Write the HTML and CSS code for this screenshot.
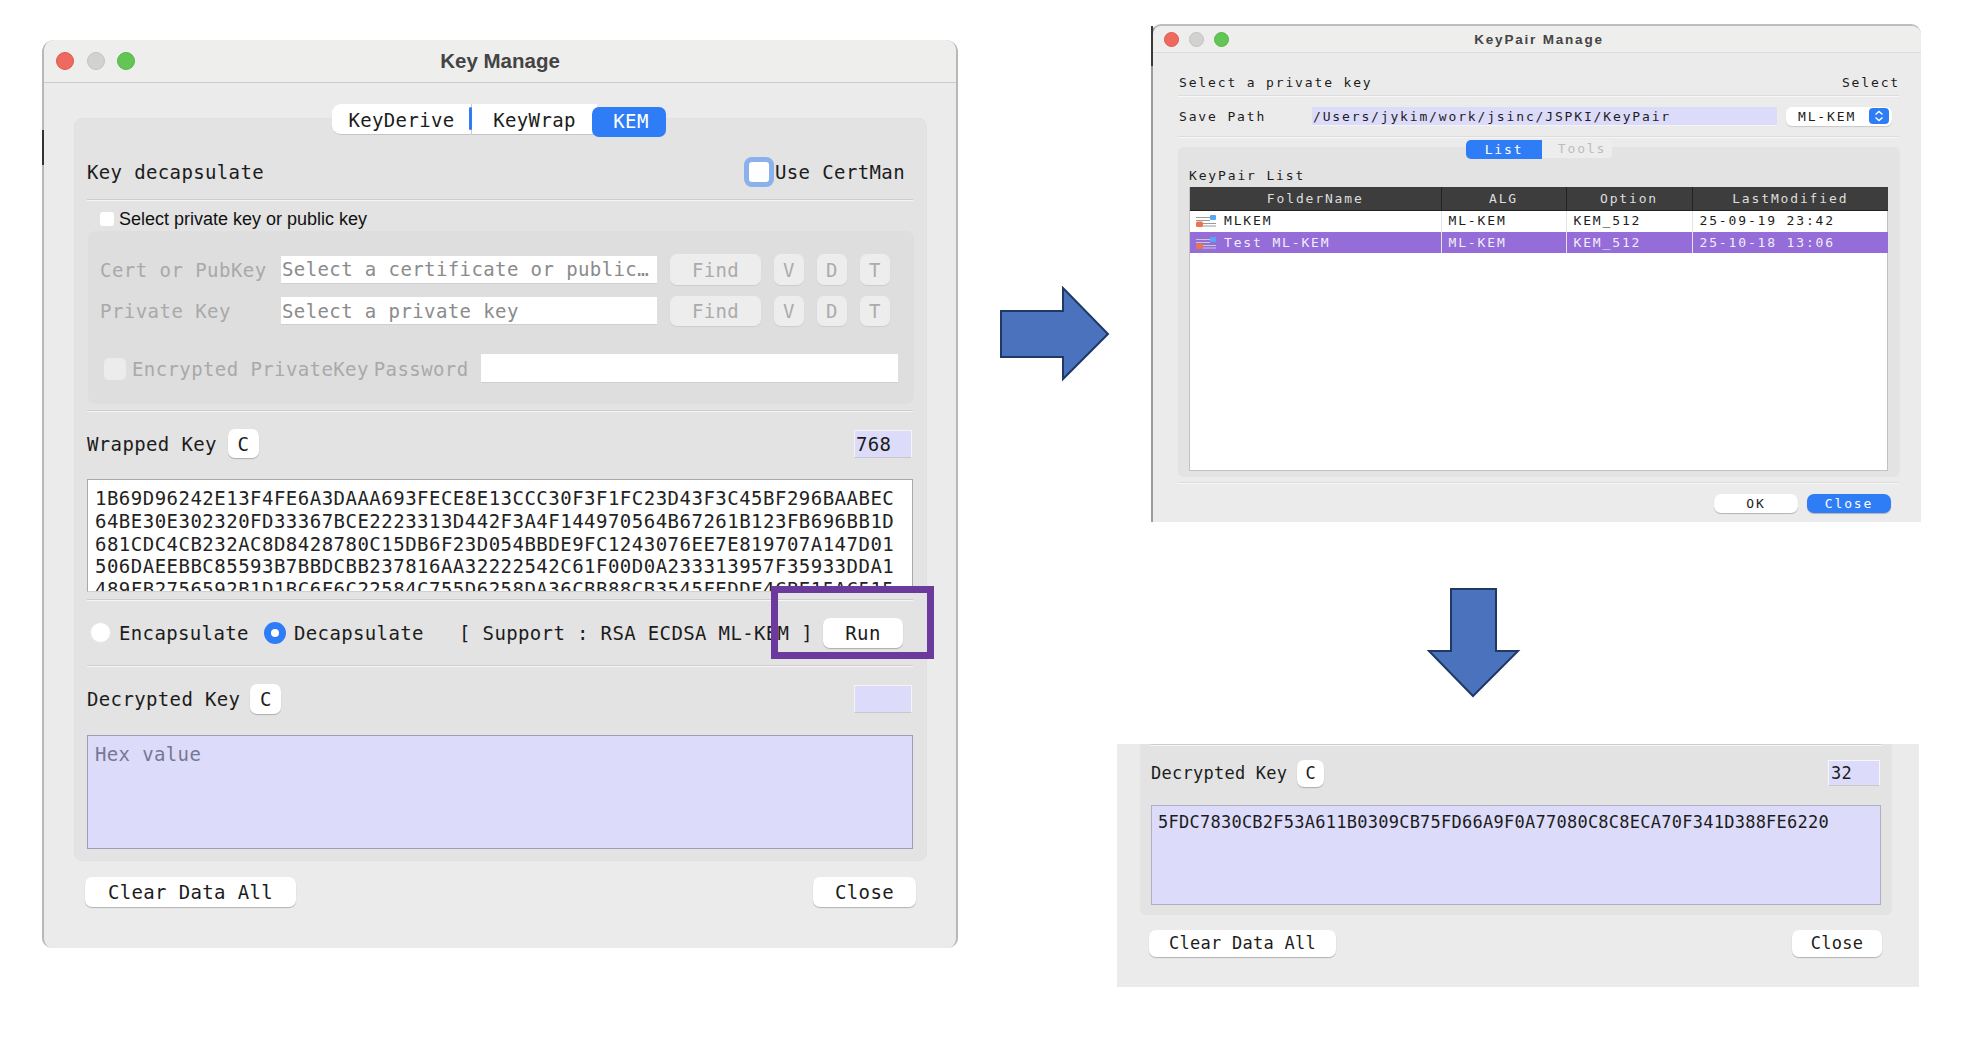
FILE: index.html
```html
<!DOCTYPE html>
<html lang="en">
<head>
<meta charset="utf-8">
<title>Key Manage</title>
<link rel="stylesheet" href="styles.css">
</head>
<body>
<main class="canvas">

  <section class="win win-main">
    <header class="titlebar">
      <div class="lights"><i class="light red"></i><i class="light idle"></i><i class="light green"></i></div>
      <h1 class="win-title">Key Manage</h1>
    </header>
    <nav class="tabs">
      <span class="tab tab-derive">KeyDerive</span>
      <span class="tab tab-wrap">KeyWrap</span>
      <span class="tab tab-kem">KEM</span>
    </nav>
    <div class="group">
      <div class="row row-head">
        <span>Key decapsulate</span>
        <label class="certman"><i class="focus-check"></i><span>Use CertMan</span></label>
      </div>
      <div class="rule rule-a"></div>
      <label class="plain-check"><i class="check"></i><span>Select private key or public key</span></label>
      <div class="inner">
        <div class="key-row key-row-1">
          <span class="key-label">Cert or PubKey</span>
          <div class="field">Select a certificate or public…</div>
          <span class="btn off find">Find</span>
          <span class="btn off mini">V</span>
          <span class="btn off mini">D</span>
          <span class="btn off mini">T</span>
        </div>
        <div class="key-row key-row-2">
          <span class="key-label">Private Key</span>
          <div class="field">Select a private key</div>
          <span class="btn off find">Find</span>
          <span class="btn off mini">V</span>
          <span class="btn off mini">D</span>
          <span class="btn off mini">T</span>
        </div>
        <div class="pass-row">
          <i class="check check-off"></i>
          <span class="pass-label">Encrypted PrivateKey<span class="pass-word">Password</span></span>
          <div class="field field-pass"></div>
        </div>
      </div>
      <div class="rule rule-b"></div>
      <div class="row row-wrapped">
        <span>Wrapped Key</span>
        <span class="btn mini-c">C</span>
        <span class="len">768</span>
      </div>
      <div class="hexbox hexbox-white">
        <div>1B69D96242E13F4FE6A3DAAA693FECE8E13CCC30F3F1FC23D43F3C45BF296BAABEC</div>
        <div>64BE30E302320FD33367BCE2223313D442F3A4F144970564B67261B123FB696BB1D</div>
        <div>681CDC4CB232AC8D8428780C15DB6F23D054BBDE9FC1243076EE7E819707A147D01</div>
        <div>506DAEEBBC85593B7BBDCBB237816AA32222542C61F00D0A233313957F35933DDA1</div>
        <div>489FB2756592B1D1BC6F6C22584C755D6258DA36CBB88CB3545FEDDF4CBE15AC515</div>
      </div>
      <div class="rule rule-c"></div>
      <div class="row row-run">
        <i class="radio"></i><span class="radio-text">Encapsulate</span>
        <i class="radio radio-on"></i><span class="radio-text">Decapsulate</span>
        <span class="support">[ Support : RSA ECDSA ML-KEM ]</span>
        <span class="btn run">Run</span>
      </div>
      <div class="rule rule-d"></div>
      <div class="row row-decrypted">
        <span>Decrypted Key</span>
        <span class="btn mini-c">C</span>
        <span class="len"></span>
      </div>
      <div class="hexbox hexbox-lilac"><span class="placeholder">Hex value</span></div>
    </div>
    <footer class="foot">
      <span class="btn clear">Clear Data All</span>
      <span class="btn close">Close</span>
    </footer>
  </section>

  <div class="highlight"></div>

  <svg class="arrow arrow-right" width="112" height="96" viewBox="0 0 112 96"><polygon points="2,25 64,25 64,2 109,48 64,93 64,71 2,71"/></svg>
  <svg class="arrow arrow-down" width="96" height="112" viewBox="0 0 96 112"><polygon points="25,2 70,2 70,64 92,64 47,109 3,64 25,64"/></svg>

  <section class="win win-pair">
    <header class="titlebar">
      <div class="lights"><i class="light red"></i><i class="light idle"></i><i class="light green"></i></div>
      <h2 class="win-title">KeyPair Manage</h2>
    </header>
    <div class="pair-body">
      <div class="pair-row pair-row-top"><span>Select a private key</span><span class="pair-select">Select</span></div>
      <div class="rule rule-p1"></div>
      <div class="pair-row pair-row-path">
        <span class="path-label">Save Path</span>
        <div class="path-field">/Users/jykim/work/jsinc/JSPKI/KeyPair</div>
        <div class="combo"><span>ML-KEM</span>
          <svg class="combo-arrow" width="20" height="16" viewBox="0 0 20 16"><rect width="20" height="16" rx="4" fill="#2f7df6"/><path d="M6.5 6.5 10 3.5l3.5 3M6.5 9.5l3.5 3 3.5-3" fill="none" stroke="#fff" stroke-width="1.4"/></svg>
        </div>
      </div>
      <div class="rule rule-p2"></div>
      <nav class="pair-tabs"><span class="ptab ptab-on">List</span><span class="ptab ptab-off">Tools</span></nav>
      <div class="pair-group">
        <div class="list-label">KeyPair List</div>
        <div class="table-box">
          <table class="pair-table">
            <colgroup><col class="c1"><col class="c2"><col class="c3"><col class="c4"></colgroup>
            <thead><tr><th>FolderName</th><th>ALG</th><th>Option</th><th>LastModified</th></tr></thead>
            <tbody>
              <tr><td class="name"><svg class="key-icon" width="20" height="12" viewBox="0 0 20 12"><path d="M0 2h14v1H0zM0 5h14v1H0zM7 8h13v1H7zM7 10.500h13v1H7z" fill="#9a9a9a"/><rect x="14" y="0" width="6" height="5" rx="1" fill="#58a6ef"/><rect x="0" y="6.500" width="7" height="5.500" rx="1.500" fill="#ea7350"/></svg>MLKEM</td><td>ML-KEM</td><td>KEM_512</td><td>25-09-19 23:42</td></tr>
              <tr class="selected"><td class="name"><svg class="key-icon" width="20" height="12" viewBox="0 0 20 12"><path d="M0 2h14v1H0zM0 5h14v1H0zM7 8h13v1H7zM7 10.500h13v1H7z" fill="#c9c9d6"/><rect x="14" y="0" width="6" height="5" rx="1" fill="#58a6ef"/><rect x="0" y="6.500" width="7" height="5.500" rx="1.500" fill="#ea7350"/></svg>Test ML-KEM</td><td>ML-KEM</td><td>KEM_512</td><td>25-10-18 13:06</td></tr>
            </tbody>
          </table>
        </div>
      </div>
      <div class="rule rule-p3"></div>
      <footer class="pair-foot"><span class="btn pbtn">OK</span><span class="btn pbtn pbtn-blue">Close</span></footer>
    </div>
  </section>

  <section class="win win-result">
    <div class="result-group">
      <div class="rule"></div>
      <div class="result-row">
        <span>Decrypted Key</span>
        <span class="btn result-c">C</span>
        <span class="result-len">32</span>
      </div>
      <div class="result-hex">5FDC7830CB2F53A611B0309CB75FD66A9F0A77080C8C8ECA70F341D388FE6220</div>
    </div>
    <footer class="result-foot">
      <span class="btn result-clear">Clear Data All</span>
      <span class="btn result-close">Close</span>
    </footer>
  </section>

</main>
</body>
</html>
```
FILE: styles.css
```css
* { box-sizing: border-box; }
html, body { margin: 0; padding: 0; background: #fff; }
body { overflow: hidden; }
i { display: block; font-style: normal; }
h1, h2 { margin: 0; }

.canvas {
  position: relative;
  width: 1984px;
  height: 1060px;
  font-family: "DejaVu Sans Mono", "Liberation Mono", monospace;
  color: #1c1c1c;
}

/* Windows */
.win { position: absolute; background: #ebebeb; }
.win-main {
  left: 42px; top: 40px; width: 916px; height: 908px;
  border-left: 2px solid #b8b8b8;
  border-right: 2px solid #b8b8b8;
  border-radius: 12px 12px 10px 10px;
  font-size: 19px;
  letter-spacing: .36px;
}
.win-main::before {
  content: ""; position: absolute; left: -2px; top: 90px; width: 2px; height: 35px; background: #333;
}
.win-pair {
  left: 1151px; top: 24px; width: 770px; height: 498px;
  border-left: 2px solid #9a9a9a;
  border-top: 2px solid #bdbdbd;
  border-radius: 10px 10px 0 0;
  font-size: 13px;
  letter-spacing: 1.85px;
}
.win-pair::before {
  content: ""; position: absolute; left: -2px; top: 0; width: 2px; height: 40px; background: #3a3a3a;
}
.win-result {
  left: 1117px; top: 744px; width: 802px; height: 243px;
  font-size: 17px;
  letter-spacing: .25px;
}

/* Title bars */
.titlebar {
  display: grid;
  grid-template-columns: 1fr auto 1fr;
  align-items: center;
  background: #eeeeed;
  border-bottom: 1px solid #cbcbcb;
  border-radius: 10px 10px 0 0;
}
.win-main .titlebar { height: 43px; padding: 0 12px 0 12px; }
.win-pair .titlebar { height: 27px; padding: 0 7px 0 11px; border-bottom-color: #dcdcdc; }
.lights { display: flex; }
.win-main .lights { gap: 12.500px; }
.win-pair .lights { gap: 10px; }
.light { border-radius: 50%; }
.win-main .light { width: 18px; height: 18px; }
.win-pair .light { width: 15px; height: 15px; }
.red { background: #ee6a5f; border: 1px solid #e0584e; }
.idle { background: #d2d2d0; border: 1px solid #c2c2c0; }
.green { background: #62c554; border: 1px solid #55b648; }
.win-title {
  font-family: "Liberation Sans", Arial, sans-serif;
  font-weight: 700;
  color: #444;
}
.win-main .win-title { font-size: 20.500px; letter-spacing: 0; }
.win-pair .win-title { font-size: 13.500px; letter-spacing: 1.800px; }

/* Key Manage tabs */
.tabs {
  position: relative;
  display: flex;
  margin: 21px 0 0 288px;
  height: 33px;
}
.tab {
  display: flex; align-items: center; justify-content: center;
  height: 31px;
  padding-top: 2px;
  background: #fff;
  border-bottom: 1px solid #c4c4c4;
}
.tab-derive { width: 140px; border-radius: 9px 0 0 9px; border-right: 1px solid #c9c9c9; }
.tab-derive::after {
  content: ""; position: absolute; left: 137px; top: 3px; width: 3px; height: 23px; background: #2f7df6; border-radius: 2px;
}
.tab-wrap { width: 125px; }
.tab-kem {
  width: 74px; height: 30px; margin: 3px 0 0 -5px;
  padding: 0 0 3px 4px;
  color: #fff;
  background: #2f7df6;
  border: 0;
  border-radius: 7px;
}

/* Main group */
.group {
  margin: -19px 29px 0 30px;
  height: 743px;
  padding: 38px 13px 0 12px;
  background: #e3e3e3;
  border: 1px solid #e0e0e0;
  border-radius: 8px;
}
.row { display: flex; align-items: center; }
.row-head { height: 30px; justify-content: space-between; margin-right: 9px; }
.certman { display: flex; align-items: center; margin-right: -1px; letter-spacing: .38px; }
.focus-check {
  width: 30px; height: 30px; margin-right: 1px;
  background: #fff;
  border: 5px solid #8ab1ec;
  border-radius: 8px;
}
.rule { height: 2px; background: #f6f6f6; border-top: 1px solid #cdcdcd; }
.rule-a { margin-top: 12px; }
.plain-check {
  display: flex; align-items: center; height: 14px; margin: 11px 0 0 13px;
  font-family: "Liberation Sans", Arial, sans-serif;
  font-size: 18px; letter-spacing: 0; color: #111;
}
.check { width: 14px; height: 14px; margin-right: 5px; background: #fff; border-radius: 3px; }

.inner {
  margin: 5px -1px 0 1px;
  height: 173px;
  padding: 23px 16px 0 12px;
  background: #dedede;
  border-radius: 8px;
  color: #a9a9a9;
}
.key-row { display: flex; align-items: center; gap: 13px; }
.key-row-1 { height: 31px; }
.key-row-2 { height: 30px; margin-top: 11px; }
.key-label { width: 168px; letter-spacing: .46px; }
.field {
  width: 376px; height: 28px; padding-left: 1px;
  display: flex; align-items: center;
  background: #fff;
  border-bottom: 1px solid #cfcfcf;
  color: #8b8b8b;
  letter-spacing: .4px;
  white-space: nowrap; overflow: hidden;
}
.btn {
  display: flex; align-items: center; justify-content: center;
  flex: none;
  background: #fff;
  border-radius: 7px;
  box-shadow: 0 1px 1px rgba(0,0,0,.24);
}
.btn.off { background: #ededed; color: #ababab; box-shadow: 0 1px 1px rgba(0,0,0,.08); height: 100%; }
.find { width: 91px; }
.mini { width: 30px; }
.pass-row { display: flex; align-items: center; height: 29px; margin-top: 28px; margin-left: 4px; }
.check-off { width: 22px; height: 22px; margin-right: 6px; background: #ececec; border-radius: 5px; }
.pass-label { width: 349px; white-space: nowrap; letter-spacing: .4px; }
.pass-word { margin-left: 5px; }
.field-pass { flex: 1; width: auto; height: 29px; }
.rule-b { margin-top: 6px; }

.row-wrapped, .row-decrypted { height: 29px; }
.row-wrapped { margin-top: 17px; }
.row-decrypted { margin-top: 17px; height: 30px; }
.mini-c { width: 31px; height: 29px; margin-left: 11px; }
.row-decrypted .mini-c { margin-left: 10px; height: 30px; }
.len {
  width: 58px; height: 28px; margin-left: auto; margin-right: 1px; padding-left: 1px;
  display: flex; align-items: center;
  background: #dcdcfa;
  border: 1px solid #f4f4f4;
  border-bottom-color: #c8c8c8;
}
.hexbox {
  margin-top: 21px; padding: 7px 7px 0;
  overflow: hidden;
  font-size: 19px; letter-spacing: .49px; line-height: 22.800px;
  white-space: nowrap;
  border: 1px solid #a8a8a8;
}
.hexbox-white { height: 113px; background: #fff; border-bottom-color: #d0d0d0; color: #222; }
.hexbox-lilac { height: 114px; background: #dcdcfa; border-color: #9d9db8; }
.placeholder { color: #777793; letter-spacing: .36px; }
.rule-c { margin-top: 7px; }
.row-run { height: 30px; margin-top: 16px; padding-top: 1px; }
.radio { width: 21px; height: 21px; margin-left: 3px; background: #fff; border: 1px solid #e6e6e6; border-radius: 50%; }
.radio-text { margin-left: 8px; width: 131px; }
.radio-on { margin-left: 14px; width: 22px; height: 22px; background: #fff; border: 7px solid #2f7df6; }
.radio-on + .radio-text { margin-left: 8px; }
.support { margin-left: 34px; white-space: nowrap; letter-spacing: .36px; }
.run { width: 80px; height: 30px; margin-left: auto; margin-right: 10px; }
.rule-d { margin-top: 18px; }

.foot { display: flex; justify-content: space-between; margin: 16px 40px 0 41px; }
.clear { width: 211px; height: 30px; }
.close { width: 103px; height: 30px; }

/* Overlays */
.highlight {
  position: absolute; left: 771px; top: 586px; width: 163px; height: 73px;
  border: 7px solid #6b3a9c;
}
.arrow { position: absolute; fill: #4a72bd; stroke: #1f3864; stroke-width: 2; }
.arrow-right { left: 999px; top: 286px; }
.arrow-down { left: 1426px; top: 587px; }

/* KeyPair window */
.pair-body { padding: 19px 22px 0 25px; }
.pair-row { display: flex; align-items: center; }
.pair-row-top { height: 20px; justify-content: space-between; padding-left: 1px; }
.pair-select { margin-right: -1px; }
.rule-p1 { margin-top: 3px; }
.rule-p1, .rule-p2, .rule-p3 { background: #f7f7f7; border-top-color: #dcdcdc; }
.pair-row-path { height: 19px; margin-top: 10px; }
.path-label { width: 133px; margin-left: 1px; }
.path-field {
  width: 465px; height: 19px; padding-left: 1px;
  display: flex; align-items: center;
  background: #dcdcfa;
  border-bottom: 1px solid #f4f4f4;
  white-space: nowrap;
}
.combo {
  display: flex; align-items: center; justify-content: space-between;
  width: 106px; height: 19px; margin-left: 9px; padding: 0 3px 1px 12px;
  background: #fff;
  border-radius: 6px;
  box-shadow: 0 1px 1px rgba(0,0,0,.15);
}
.combo-arrow { flex: none; }
.rule-p2 { margin-top: 10px; }
.pair-tabs {
  position: relative;
  display: flex;
  height: 19px;
  margin: 2px 0 0 288px;
}
.ptab { display: flex; align-items: center; justify-content: center; height: 19px; }
.ptab-on { width: 76px; background: #2f7df6; color: #fff; border-radius: 5px 0 0 5px; }
.ptab-off { width: 70px; margin-top: -1px; padding-left: 10px; background: #ededed; color: #bcbcbc; border-radius: 0 3px 3px 0; }
.pair-group {
  height: 330px;
  margin: -12px -1px 0 0;
  padding: 18px 12px 0 11px;
  background: #e3e3e3;
  border-radius: 6px;
}
.list-label { height: 20px; display: flex; align-items: center; margin-bottom: 2px; }
.table-box {
  height: 284px;
  background: #fff;
  border: 1px solid #c2c2c2;
  border-top: 0;
}
.pair-table { width: 698px; table-layout: fixed; border-collapse: collapse; }
.c1 { width: 251px; }
.c2 { width: 125px; }
.c3 { width: 126px; }
.c4 { width: 196px; }
.pair-table th {
  height: 23px; padding: 0;
  background: #3d3d3d; color: #dedede;
  font-weight: 400;
  border-right: 1px solid #222;
  border-bottom: 1px solid #222;
}
.pair-table th:last-child { border-right: 0; }
.pair-table td {
  height: 22px; padding: 0 0 1px 7px;
  white-space: nowrap;
  border-right: 1px solid #e4e4e4;
}
.pair-table td:last-child { border-right: 0; }
.pair-table td.name { padding-left: 6px; }
.key-icon { vertical-align: -2px; margin-right: 8px; }
.selected td { height: 21px; background: #946dd9; color: #f2ecfb; }
.rule-p3 { margin-top: 5px; }
.pair-foot { display: flex; justify-content: flex-end; gap: 9px; height: 19px; margin: 10px 8px 0 0; }
.pbtn { width: 84px; height: 19px; }
.pbtn-blue { background: #2f7df6; color: #fff; }

/* Result window */
.result-group {
  height: 171px;
  margin: 0 27px 0 23px;
  padding: 0 11px 0 11px;
  background: #e3e3e3;
  border-radius: 0 0 6px 6px;
}
.result-row { display: flex; align-items: center; height: 27px; margin-top: 14px; padding-bottom: 1px; }
.result-c { width: 27px; height: 27px; margin-left: 10px; padding-bottom: 1px; }
.result-len {
  width: 52px; height: 26px; margin-left: auto; margin-right: 1px; padding-left: 2px;
  display: flex; align-items: center; align-self: flex-start;
  background: #dcdcfa;
  border: 1px solid #f8f8f8;
  border-bottom-color: #c8c8c8;
}
.result-hex {
  height: 100px; margin-top: 18px; padding: 6px 6px 0;
  background: #dcdcfa;
  border: 1px solid #b0b0c4;
  white-space: nowrap;
  line-height: 20px;
}
.result-foot { display: flex; justify-content: space-between; margin: 15px 37px 0 32px; }
.result-clear { width: 187px; height: 27px; padding-bottom: 2px; }
.result-close { width: 90px; height: 27px; padding-bottom: 2px; }
```
